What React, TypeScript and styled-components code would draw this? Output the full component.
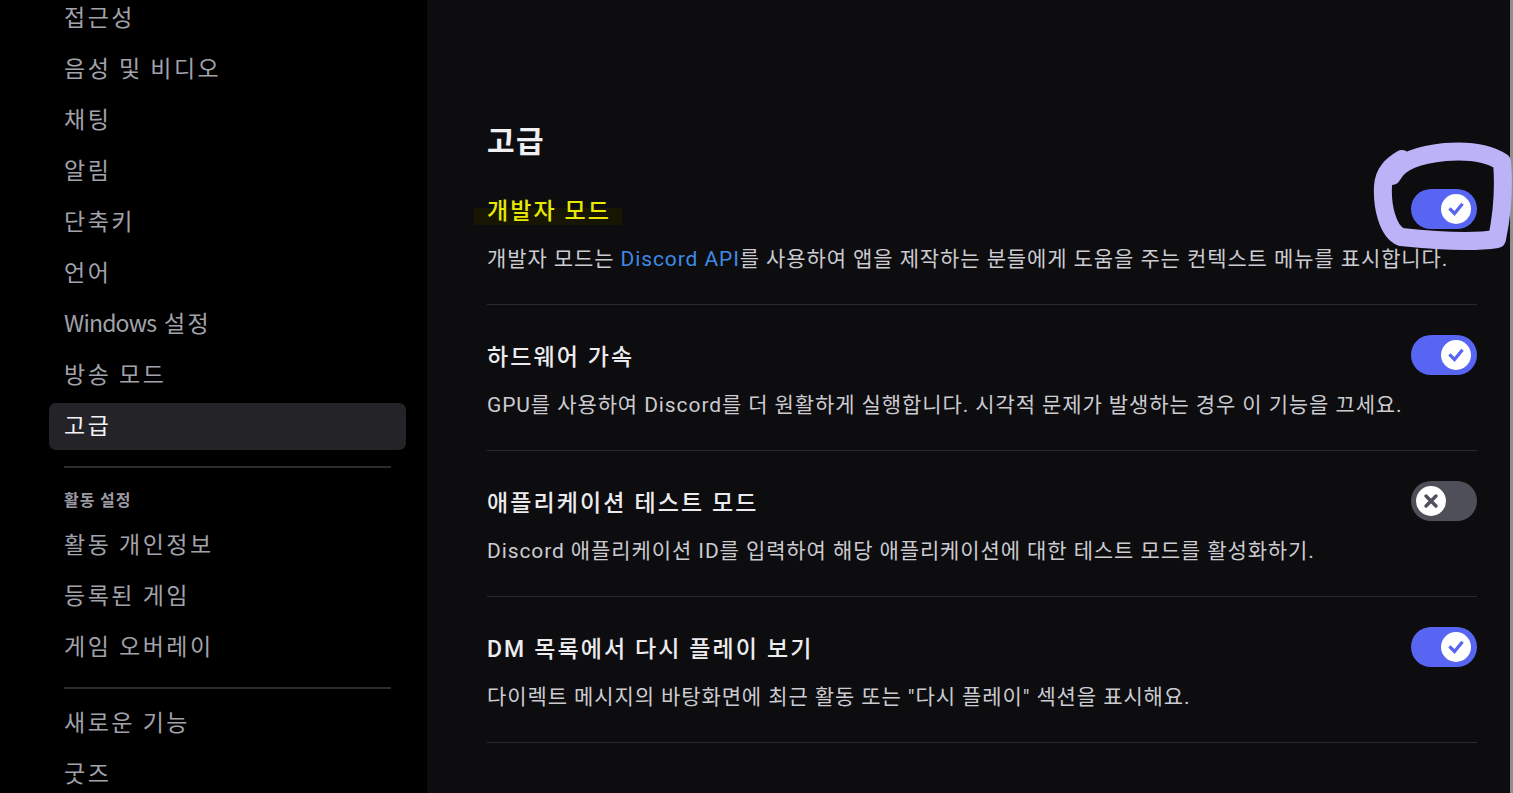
import React from 'react';
import styled, { createGlobalStyle } from 'styled-components';

const GlobalStyle = createGlobalStyle`
  html, body {
    margin: 0;
    padding: 0;
    height: 100%;
    background: #000;
  }
  #root {
    height: 100%;
  }
`

const Shell = styled.div`
  display: flex;
  width: 1513px;
  height: 793px;
  overflow: hidden;
  font-family: "Noto Sans CJK KR", sans-serif;
`

const Sidebar = styled.nav`
  width: 427px;
  flex-shrink: 0;
  background: #000;
  padding-left: 49px;
  box-sizing: border-box;
`

const NavList = styled.div`
  width: 357px;
  margin-top: -5px;
  display: flex;
  flex-direction: column;
  gap: 4px;
`

const NavItem = styled.div<{ $active?: boolean }>`
  height: 47px;
  display: flex;
  align-items: center;
  padding: 0 0 5px 15px;
  box-sizing: border-box;
  border-radius: 7px;
  font-size: 23px;
  letter-spacing: 2.5px;
  white-space: pre;
  color: ${p => (p.$active ? '#f2f2f4' : '#a2a2aa')};
  background: ${p => (p.$active ? '#242428' : 'transparent')};
`

const Latin = styled.span`
  letter-spacing: -0.8px;
`

const NavSeparator = styled.div<{ $top: number; $bottom: number }>`
  height: 2px;
  margin: ${p => p.$top}px 15px ${p => p.$bottom}px;
  background: #2b2b30;
`

const NavHeader = styled.div`
  padding-left: 15px;
  height: 20px;
  line-height: 20px;
  margin-bottom: 9px;
  font-size: 16px;
  font-weight: 700;
  letter-spacing: 1px;
  color: #9a9aa2;
`

const Main = styled.main`
  position: relative;
  flex: 1;
  background: #0d0d10;
  padding: 124px 0 0 60px;
  box-sizing: border-box;
`

const Content = styled.div`
  width: 990px;
`

const Heading = styled.h1`
  margin: 0 0 -1px;
  height: 36px;
  line-height: 36px;
  font-family: Roboto, "Noto Sans CJK KR", sans-serif;
  font-size: 30px;
  font-weight: 700;
  letter-spacing: 1.5px;
  color: #f0f0f2;
`

const Row = styled.section`
  padding: 30px 0 32px;
  border-bottom: 1px solid #2a2a2f;
`

const RowHeader = styled.div`
  height: 40px;
  display: flex;
  align-items: center;
  justify-content: space-between;
`

const Title = styled.div`
  font-family: Roboto, "Noto Sans CJK KR", sans-serif;
  font-size: 23px;
  font-weight: 500;
  letter-spacing: 2.1px;
  color: #ececee;
`

const Highlight = styled.span`
  position: relative;
  color: #e8e800;
  z-index: 0;

  &::before {
    content: '';
    position: absolute;
    left: -13px;
    right: -11px;
    top: 10px;
    height: 17px;
    background: #161603;
    z-index: -1;
  }
`

const Description = styled.div`
  margin-top: 17px;
  height: 26px;
  line-height: 26px;
  white-space: nowrap;
  font-family: Roboto, "Noto Sans CJK KR", sans-serif;
  font-size: 21px;
  letter-spacing: 0.9px;
  color: #cbcbd0;
`

const Link = styled.span`
  color: #3f8ae4;
`

const Track = styled.div<{ $on: boolean }>`
  width: 66px;
  height: 40px;
  border-radius: 20px;
  background: ${p => (p.$on ? '#5865f2' : '#4e4f58')};
  display: flex;
  align-items: center;
  justify-content: ${p => (p.$on ? 'flex-end' : 'flex-start')};
  padding: 0 6px 0 5px;
  box-sizing: border-box;
  flex-shrink: 0;
`

const Knob = styled.div`
  width: 30px;
  height: 30px;
  border-radius: 50%;
  background: #fff;
  display: flex;
  align-items: center;
  justify-content: center;
`

const Scribble = styled.svg`
  position: absolute;
  left: 933px;
  top: 130px;
  pointer-events: none;
`

const EdgeStrip = styled.div`
  width: 3px;
  flex-shrink: 0;
  background: #8e8e92;
`

const Toggle: React.FC<{ on: boolean }> = ({ on }) => (
  <Track $on={on}>
    <Knob>
      {on ? (
        <svg width="20" height="20" viewBox="0 0 20 20">
          <polyline points="4.5,10.5 8.5,14.5 15.5,6" fill="none" stroke="#5865f2" strokeWidth="3.2" strokeLinecap="square" strokeLinejoin="miter" />
        </svg>
      ) : (
        <svg width="18" height="18" viewBox="0 0 18 18">
          <path d="M4 4 L14 14 M14 4 L4 14" stroke="#4e4f58" strokeWidth="3.4" strokeLinecap="round" />
        </svg>
      )}
    </Knob>
  </Track>
)

interface Setting {
  title: React.ReactNode
  description: React.ReactNode
  on: boolean
}

const settings: Setting[] = [
  {
    title: <Highlight>개발자 모드</Highlight>,
    description: <>개발자 모드는 <Link>Discord API</Link>를 사용하여 앱을 제작하는 분들에게 도움을 주는 컨텍스트 메뉴를 표시합니다.</>,
    on: true,
  },
  {
    title: '하드웨어 가속',
    description: 'GPU를 사용하여 Discord를 더 원활하게 실행합니다. 시각적 문제가 발생하는 경우 이 기능을 끄세요.',
    on: true,
  },
  {
    title: '애플리케이션 테스트 모드',
    description: 'Discord 애플리케이션 ID를 입력하여 해당 애플리케이션에 대한 테스트 모드를 활성화하기.',
    on: false,
  },
  {
    title: 'DM 목록에서 다시 플레이 보기',
    description: '다이렉트 메시지의 바탕화면에 최근 활동 또는 "다시 플레이" 섹션을 표시해요.',
    on: true,
  },
]

const appItems: { key: string; label: React.ReactNode }[] = [
  { key: '접근성', label: '접근성' },
  { key: '음성 및 비디오', label: '음성 및 비디오' },
  { key: '채팅', label: '채팅' },
  { key: '알림', label: '알림' },
  { key: '단축키', label: '단축키' },
  { key: '언어', label: '언어' },
  { key: 'Windows 설정', label: <span><Latin>Windows</Latin> 설정</span> },
  { key: '방송 모드', label: '방송 모드' },
  { key: '고급', label: '고급' },
]
const activityItems = ['활동 개인정보', '등록된 게임', '게임 오버레이']
const extraItems = ['새로운 기능', '굿즈']

const App: React.FC = () => {
  return (
    <>
      <GlobalStyle />
      <Shell>
        <Sidebar>
          <NavList>
            {appItems.map(item => (
              <NavItem key={item.key} $active={item.key === '고급'}>{item.label}</NavItem>
            ))}
            <NavSeparator $top={12} $bottom={17} />
            <NavHeader>활동 설정</NavHeader>
            {activityItems.map(item => (
              <NavItem key={item}>{item}</NavItem>
            ))}
            <NavSeparator $top={12} $bottom={7} />
            {extraItems.map(item => (
              <NavItem key={item}>{item}</NavItem>
            ))}
          </NavList>
        </Sidebar>
        <Main>
          <Content>
            <Heading>고급</Heading>
            {settings.map((s, i) => (
              <Row key={i}>
                <RowHeader>
                  <Title>{s.title}</Title>
                  <Toggle on={s.on} />
                </RowHeader>
                <Description>{s.description}</Description>
              </Row>
            ))}
          </Content>
          {/* hand-drawn annotation around the developer mode switch */}
          <Scribble width="160" height="130" viewBox="1360 130 160 130">
            <path
              d="M1392 176 C1400 160 1420 155 1445 152 C1470 150 1490 154 1502 162 C1504 185 1502 215 1497 239 C1470 243 1430 240 1401 237 C1387 231 1382 205 1383 186 C1384 172 1392 165 1402 159"
              fill="none"
              stroke="#bbb2f8"
              strokeWidth="18"
              strokeLinecap="round"
              strokeLinejoin="round"
            />
          </Scribble>
        </Main>
        <EdgeStrip />
      </Shell>
    </>
  )
}

export default App
